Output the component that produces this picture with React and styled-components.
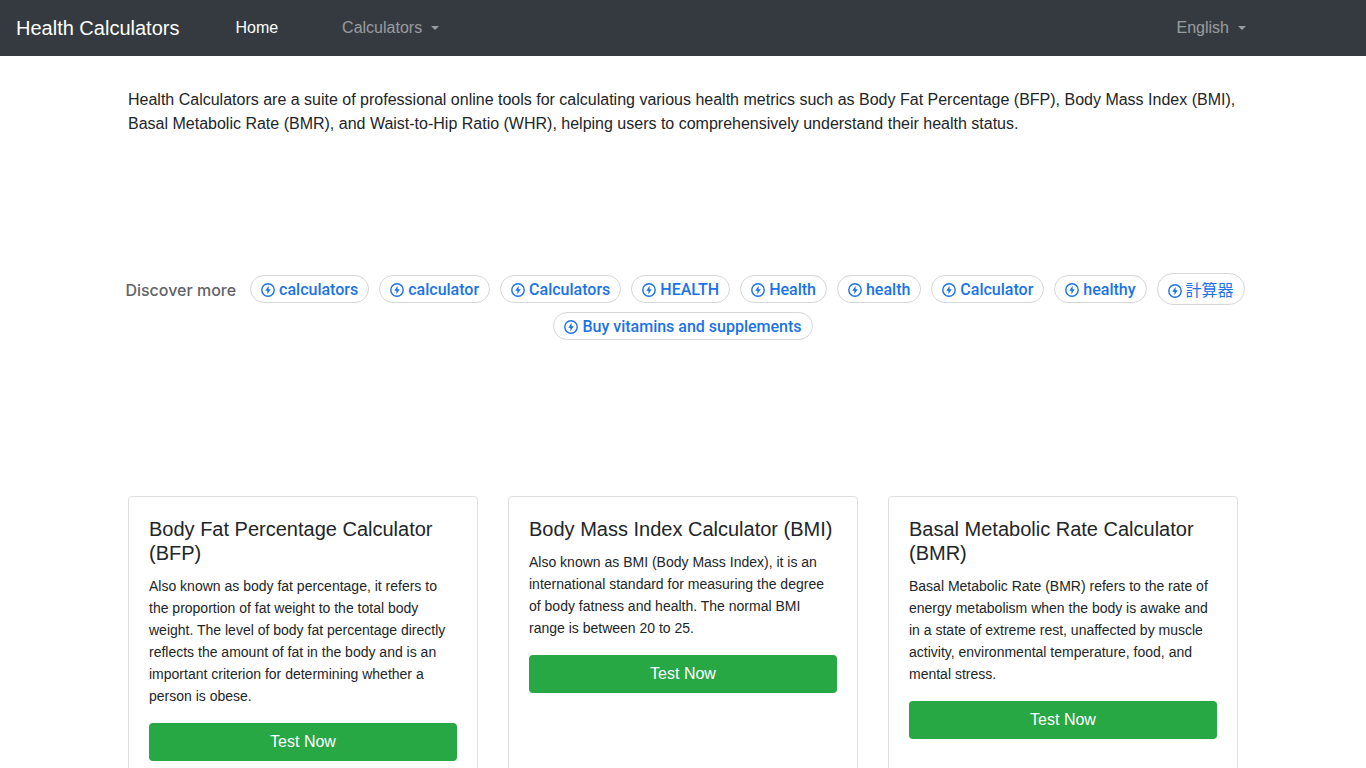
import React from "react"
import styled, { createGlobalStyle } from "styled-components"

const GlobalStyle = createGlobalStyle`
  *, *::before, *::after {
    box-sizing: border-box;
  }
  body {
    margin: 0;
    background: #ffffff;
    color: #212529;
    font-family: "Liberation Sans", Arial, sans-serif;
    font-size: 16px;
    line-height: 24px;
  }
`;

const NavBar = styled.nav`
  display: flex;
  align-items: center;
  min-height: 56px;
  padding: 8px 120px 8px 16px;
  background: #343a40;
`;

const Brand = styled.a`
  margin-right: 56px;
  color: #ffffff;
  font-size: 20px;
  line-height: 30px;
  text-decoration: none;
  white-space: nowrap;
`;

const NavLinks = styled.div`
  flex-grow: 1;
  display: flex;
  align-items: center;
  gap: 64px;
`;

const NavLink = styled.a`
  color: #ffffff;
  text-decoration: none;
`;

const NavToggle = styled.button`
  display: flex;
  align-items: center;
  gap: 9px;
  padding: 0;
  border: none;
  background: transparent;
  color: rgba(255, 255, 255, 0.5);
  font: inherit;
  cursor: pointer;
  &::after {
    content: "";
    border-top: 4px solid;
    border-right: 4px solid transparent;
    border-left: 4px solid transparent;
  }
`;

const Container = styled.main`
  max-width: 1140px;
  margin: 0 auto;
  padding: 32px 15px;
`;

const Intro = styled.p`
  margin: 0;
`;

const Discover = styled.section`
  display: flex;
  flex-wrap: wrap;
  justify-content: center;
  align-items: center;
  gap: 7px 10px;
  margin: 137px -15px 156px;
  font-family: Roboto, "Noto Sans CJK JP", sans-serif;
  font-weight: 500;
`;

const DiscoverLabel = styled.span`
  margin: 0 4px;
  padding-top: 2px;
  color: #5f6368;
  font-family: Inter, sans-serif;
`;

const Chip = styled.a`
  display: flex;
  align-items: center;
  gap: 4px;
  min-height: ${(props) => (props.$tall ? "32px" : "28px")};
  padding: ${(props) => (props.$tall ? "4px" : "2px")} 10px 0;
  border: 1px solid #d4d6d9;
  border-radius: 16px;
  color: #1a73e8;
  font-weight: ${(props) => (props.$tall ? 400 : 500)};
  text-decoration: none;
  white-space: nowrap;
  > svg {
    display: block;
  }
`;

const CardGrid = styled.div`
  display: grid;
  grid-template-columns: repeat(3, 1fr);
  gap: 30px;
`;

const Card = styled.article`
  min-height: 288px;
  padding: 20px;
  border: 1px solid #dfdfdf;
  border-radius: 4px;
`;

const CardTitle = styled.h2`
  margin: 0 0 10px;
  font-size: 20px;
  font-weight: 400;
  line-height: 24px;
`;

const CardText = styled.p`
  margin: 0 0 16px;
  font-size: 14px;
  line-height: 22px;
`;

const TestButton = styled.button`
  display: block;
  width: 100%;
  padding: 7px 12px;
  border: none;
  border-radius: 4px;
  background: #28a745;
  color: #ffffff;
  font: inherit;
  cursor: pointer;
`;

const topics = [
  "calculators",
  "calculator",
  "Calculators",
  "HEALTH",
  "Health",
  "health",
  "Calculator",
  "healthy",
  "計算器",
  "Buy vitamins and supplements",
];

const cards = [
  {
    title: "Body Fat Percentage Calculator (BFP)",
    text: "Also known as body fat percentage, it refers to the proportion of fat weight to the total body weight. The level of body fat percentage directly reflects the amount of fat in the body and is an important criterion for determining whether a person is obese.",
  },
  {
    title: "Body Mass Index Calculator (BMI)",
    text: "Also known as BMI (Body Mass Index), it is an international standard for measuring the degree of body fatness and health. The normal BMI range is between 20 to 25.",
  },
  {
    title: "Basal Metabolic Rate Calculator (BMR)",
    text: "Basal Metabolic Rate (BMR) refers to the rate of energy metabolism when the body is awake and in a state of extreme rest, unaffected by muscle activity, environmental temperature, food, and mental stress.",
  },
];

const BoltIcon = () => (
  <svg width="14" height="14" viewBox="0 0 14 14" aria-hidden="true">
    <circle cx="7" cy="7" r="6.2" fill="none" stroke="currentColor" strokeWidth="1.4" />
    <path d="M7.6 2.8 4.3 7.7H6.4V11.2L9.7 6.3H7.6Z" fill="currentColor" />
  </svg>
);

export default function App() {
  return (
    <>
      <GlobalStyle />
      <NavBar>
        <Brand href="#">Health Calculators</Brand>
        <NavLinks>
          <NavLink href="#">Home</NavLink>
          <NavToggle type="button">Calculators</NavToggle>
        </NavLinks>
        <NavToggle type="button">English</NavToggle>
      </NavBar>
      <Container>
        <Intro>
          Health Calculators are a suite of professional online tools for calculating various health
          metrics such as Body Fat Percentage (BFP), Body Mass Index (BMI), Basal Metabolic Rate
          (BMR), and Waist-to-Hip Ratio (WHR), helping users to comprehensively understand their
          health status.
        </Intro>
        <Discover>
          <DiscoverLabel>Discover more</DiscoverLabel>
          {topics.map((topic) => (
            <Chip key={topic} href="#" $tall={topic === "計算器"}>
              <BoltIcon />
              {topic}
            </Chip>
          ))}
        </Discover>
        <CardGrid>
          {cards.map((card) => (
            <Card key={card.title}>
              <CardTitle>{card.title}</CardTitle>
              <CardText>{card.text}</CardText>
              <TestButton type="button">Test Now</TestButton>
            </Card>
          ))}
        </CardGrid>
      </Container>
    </>
  );
}
